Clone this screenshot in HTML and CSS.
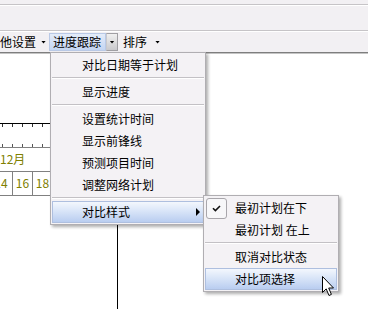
FILE: index.html
```html
<!DOCTYPE html>
<html lang="zh-CN">
<head>
    <meta charset="UTF-8">
    <title>进度跟踪</title>
    <link rel="stylesheet" href="styles.css">
</head>
<body>
    <div class="app">
        <div class="band band-top"></div>
        <div class="band band-mid"></div>
        <div class="toolbar">
            <span class="tool">他设置<i class="caret"></i></span>
            <span class="tool tool-open">
                <span class="tool-label">进度跟踪</span>
                <span class="tool-drop"><i class="caret"></i></span>
            </span>
            <span class="tool tool-sort">排序<i class="caret"></i></span>
        </div>

        <div class="chart">
            <div class="pane">
                <div class="scale-axis"></div>
                <div class="scale-month">12月</div>
                <div class="scale-days">
                    <span class="day day-first">14</span>
                    <span class="day">16</span>
                    <span class="day">18</span>
                </div>
            </div>
        </div>

        <div class="menu">
            <div class="menu-item">对比日期等于计划</div>
            <div class="menu-sep"></div>
            <div class="menu-item">显示进度</div>
            <div class="menu-sep"></div>
            <div class="menu-item">设置统计时间</div>
            <div class="menu-item">显示前锋线</div>
            <div class="menu-item">预测项目时间</div>
            <div class="menu-item">调整网络计划</div>
            <div class="menu-sep"></div>
            <div class="menu-item active">
                <span class="menu-label">对比样式</span>
                <i class="submenu-arrow"></i>
            </div>
        </div>

        <div class="menu submenu">
            <div class="menu-item">
                <span class="gutter">
                    <span class="checkbox">
                        <svg width="9" height="7" viewBox="0 0 9 7"><path d="M1 3.2 L3.4 5.6 L8 1" fill="none" stroke="#111" stroke-width="1.6"/></svg>
                    </span>
                </span>
                <span class="menu-label">最初计划在下</span>
            </div>
            <div class="menu-item"><span class="gutter"></span><span class="menu-label">最初计划&nbsp;在上</span></div>
            <div class="menu-sep"></div>
            <div class="menu-item"><span class="gutter"></span><span class="menu-label">取消对比状态</span></div>
            <div class="menu-item active"><span class="gutter"></span><span class="menu-label">对比项选择</span></div>
        </div>

        <svg class="cursor" width="14" height="22" viewBox="0 0 14 22">
            <path d="M1.5 1.5 L1.5 17.5 L5.2 13.9 L8 20.5 L10.4 19.4 L7.7 13 L12.5 13 Z" fill="#fff" stroke="#000" stroke-width="1" stroke-linejoin="miter"/>
        </svg>
    </div>
</body>
</html>
```

FILE: styles.css
```css
body {
    margin: 0;
    background-color: #f2f0f3;
    font-family: "Noto Sans CJK SC", "Liberation Sans", sans-serif;
    font-size: 12px;
    color: #000;
    overflow: hidden;
}
.app {
    position: relative;
    width: 368px;
    height: 309px;
    overflow: hidden;
}

/* top bands */
.band-top {
    height: 4px;
    border-bottom: 1px solid #c6c4c7;
}
.band-mid {
    height: 24px;
    border-top: 1px solid #fff;
    border-bottom: 1px solid #c6c4c7;
}

/* toolbar */
.toolbar {
    height: 20px;
    border-top: 1px solid #fff;
    display: flex;
    align-items: center;
    white-space: nowrap;
}
.tool {
    display: flex;
    align-items: center;
    line-height: 16px;
}
.caret {
    display: block;
    width: 5px;
    height: 3px;
    background: #000;
    clip-path: polygon(0 0, 100% 0, 50% 100%);
    margin-left: 5px;
}
.tool-open {
    margin-left: 3px;
}
.tool-label {
    height: 16px;
    padding: 0 4px 0 3px;
    border: 1px solid #b9c9e6;
    background: linear-gradient(#e4ecf9, #c3d5f2);
}
.tool-drop {
    width: 10px;
    height: 16px;
    border: 1px solid #a09fa3;
    border-left-color: #c8c8cc;
    background: linear-gradient(#f0f0f0, #c9c9cc);
    display: flex;
    align-items: center;
    justify-content: center;
}
.tool-drop .caret {
    margin-left: 0;
}
.tool-sort {
    margin-left: 5px;
}
.tool-sort .caret {
    margin-left: 8px;
}

/* chart */
.chart {
    height: 256px;
    background: #fff;
    border-top: 1px solid #7e7e7e;
    box-shadow: inset 0 1px 0 #c4c4c4;
}
.pane {
    width: 118px;
    height: 100%;
    border-right: 1px solid #000;
    padding-top: 70px;
    box-sizing: border-box;
    overflow: hidden;
}
.scale-axis {
    height: 23px;
    border-top: 1px solid #000;
    border-bottom: 1px solid #808080;
    background-image:
        linear-gradient(to right, #333 1px, transparent 1px),
        linear-gradient(to right, #555 1px, transparent 1px);
    background-size: 10px 3px, 10px 3px;
    background-repeat: repeat-x;
    background-position: 2px top, 2px bottom;
}
.scale-month {
    height: 23px;
    line-height: 22px;
    border-bottom: 1px solid #808080;
    color: #808000;
}
.scale-days {
    height: 23px;
    border-bottom: 1px solid #808080;
    display: flex;
    margin-left: -10px;
    color: #808000;
}
.day {
    flex: none;
    width: 19px;
    border-right: 1px solid #808080;
    text-align: center;
    line-height: 22px;
}
.day-first {
    width: 22px;
}

/* menus */
.menu {
    position: absolute;
    left: 50px;
    top: 52px;
    width: 152px;
    padding: 1px;
    border: 1px solid #b0aeb2;
    background: #f4f2f5;
    box-shadow: 2px 2px 3px rgba(0, 0, 0, 0.32);
}
.menu-item {
    height: 22px;
    line-height: 22px;
    padding-left: 30px;
    display: flex;
    align-items: center;
    white-space: nowrap;
    box-sizing: border-box;
}
.menu-label {
    flex: 1;
}
.menu-item.active {
    border: 1px solid #aebfdf;
    background: linear-gradient(#f3f7fd, #d9e5f8 45%, #b9cdf0);
    padding-left: 29px;
}
.menu-sep {
    height: 1px;
    margin: 1px 0 2px;
    background: #c3c1c5;
    border-bottom: 1px solid #fff;
}
.submenu-arrow {
    width: 0;
    height: 0;
    border-left: 4px solid #000;
    border-top: 4px solid transparent;
    border-bottom: 4px solid transparent;
    margin-right: 3px;
}

.submenu {
    left: 203px;
    top: 195px;
    width: 132px;
}
.submenu .menu-item {
    padding-left: 0;
}
.submenu .gutter {
    width: 30px;
    height: 100%;
    display: flex;
    align-items: center;
}
.submenu .menu-item.active .gutter {
    width: 29px;
}
.checkbox {
    width: 19px;
    height: 19px;
    margin-left: 1px;
    border: 1px solid #a8a6ab;
    border-radius: 3px;
    background: #f7f7f9;
    display: flex;
    align-items: center;
    justify-content: center;
}

.cursor {
    position: absolute;
    left: 321px;
    top: 275px;
}
```
